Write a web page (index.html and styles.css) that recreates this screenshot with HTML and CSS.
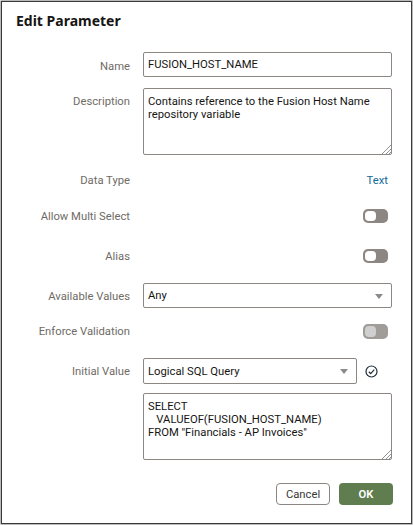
FILE: index.html

```html
<!DOCTYPE html>
<html lang="en">
<head>
    <meta charset="UTF-8">
    <title>Edit Parameter</title>
    <link rel="stylesheet" href="styles.css">
</head>
<body>
    <div class="dialog">
        <h1 class="title">Edit Parameter</h1>
        <div class="row row-name">
            <div class="label">Name</div>
            <div class="field input">FUSION_HOST_NAME</div>
        </div>
        <div class="row row-desc">
            <div class="label label-top">Description</div>
            <div class="field area">
                Contains reference to the Fusion Host Name<br>repository variable
                <svg class="grip" viewBox="0 0 9 9"><path d="M0 9L9 0M4 9L9 4M7 9L9 7"/></svg>
            </div>
        </div>
        <div class="row row-type">
            <div class="label">Data Type</div>
            <div class="value">Text</div>
        </div>
        <div class="row row-multi">
            <div class="label">Allow Multi Select</div>
            <div class="toggle-cell"><span class="toggle"></span></div>
        </div>
        <div class="row row-alias">
            <div class="label">Alias</div>
            <div class="toggle-cell"><span class="toggle"></span></div>
        </div>
        <div class="row row-avail">
            <div class="label">Available Values</div>
            <div class="field select">Any<span class="caret"></span></div>
        </div>
        <div class="row row-enforce">
            <div class="label">Enforce Validation</div>
            <div class="toggle-cell"><span class="toggle disabled"></span></div>
        </div>
        <div class="row row-initial">
            <div class="label">Initial Value</div>
            <div class="field select short">Logical SQL Query<span class="caret"></span></div>
            <svg class="check" viewBox="0 0 13 13"><circle cx="6.5" cy="6.5" r="5.5"/><path d="M3.8 6.8L5.7 8.6L9.3 4.6"/></svg>
        </div>
        <div class="row row-query">
            <div class="label"></div>
            <div class="field area">
                SELECT<br>&nbsp;&nbsp;&nbsp;VALUEOF(FUSION_HOST_NAME)<br>FROM "Financials - AP Invoices"
                <svg class="grip" viewBox="0 0 9 9"><path d="M0 9L9 0M4 9L9 4M7 9L9 7"/></svg>
            </div>
        </div>
        <div class="footer">
            <button class="btn cancel">Cancel</button>
            <button class="btn ok">OK</button>
        </div>
    </div>
</body>
</html>
```

FILE: styles.css

```css
body {
    margin: 0;
    background-color: white;
    font-family: "Roboto", Arial, sans-serif;
    font-size: 11.25px;
    color: #161513;
}
.dialog {
    box-sizing: border-box;
    width: 411px;
    height: 523px;
    margin: 1px;
    border: 1px solid #3a3a3a;
    box-shadow: 0 0 0 0.5px #777;
    background-color: white;
    padding: 0 18px 0 0;
}
.title {
    margin: 11px 0 0 14px;
    height: 16px;
    font-family: "Noto Sans", Arial, sans-serif;
    font-size: 14px;
    line-height: 16px;
    font-weight: 700;
}
.row {
    display: flex;
    align-items: center;
    height: 24px;
}
.label {
    width: 128px;
    flex: none;
    text-align: right;
    margin-right: 13px;
    color: #6f6b66;
}
.label-top {
    align-self: flex-start;
    margin-top: 7px;
}
.field {
    box-sizing: border-box;
    position: relative;
    width: 249px;
    background: white;
    border: 1px solid #8c8782;
    border-radius: 2px;
    padding: 0 4px;
    line-height: 13px;
}
.input,
.select {
    display: flex;
    align-items: center;
}
.input {
    height: 25px;
}
.select {
    height: 25px;
}
.select.short {
    width: 214px;
    height: 26px;
}
.area {
    height: 67px;
    padding-top: 6px;
}
.caret {
    position: absolute;
    right: 8px;
    top: 10px;
    border-left: 4px solid transparent;
    border-right: 4px solid transparent;
    border-top: 5px solid #8c8a88;
}
.grip {
    position: absolute;
    right: 0;
    bottom: 0;
    width: 9px;
    height: 9px;
    fill: none;
    stroke: #777;
    stroke-width: 0.8;
}
.row-name {
    height: 25px;
    margin-top: 23px;
}
.row-name .label {
    margin-top: 4px;
}
.row-desc {
    height: 67px;
    margin-top: 11px;
    align-items: flex-start;
}
.row-type {
    margin-top: 13px;
}
.value {
    width: 245px;
    text-align: right;
    color: #0f6b9a;
}
.toggle-cell {
    width: 245px;
    display: flex;
    justify-content: flex-end;
}
.toggle {
    display: block;
    box-sizing: border-box;
    width: 25px;
    height: 14px;
    border-radius: 5px;
    background-color: #8c8782;
    padding: 2px;
}
.toggle::before {
    content: "";
    display: block;
    width: 11px;
    height: 10px;
    border-radius: 4px;
    background-color: white;
}
.toggle.disabled {
    height: 15px;
    background-color: #a09c98;
}
.toggle.disabled::before {
    height: 11px;
    background-color: #cfcfcf;
}
.row-multi {
    margin-top: 12px;
}
.row-alias {
    margin-top: 16px;
}
.row-avail {
    height: 25px;
    margin-top: 15px;
}
.row-avail .label {
    margin-top: 2px;
}
.row-enforce {
    margin-top: 11px;
}
.row-initial {
    height: 26px;
    margin-top: 15px;
}
.check {
    width: 13px;
    height: 13px;
    margin-left: 8px;
    fill: none;
    stroke: #1f2a36;
    stroke-width: 1.2;
}
.row-query {
    height: 67px;
    margin-top: 9px;
}
.footer {
    display: flex;
    justify-content: flex-end;
    gap: 9px;
    margin-top: 23px;
}
.btn {
    box-sizing: border-box;
    width: 54px;
    height: 22px;
    border-radius: 4px;
    padding: 0;
    font-family: inherit;
    font-size: 11.25px;
}
.cancel {
    background: white;
    border: 1px solid #8c8782;
    color: #3a3835;
}
.ok {
    background: #5f7d4f;
    border: none;
    color: white;
    font-weight: 600;
}
```
